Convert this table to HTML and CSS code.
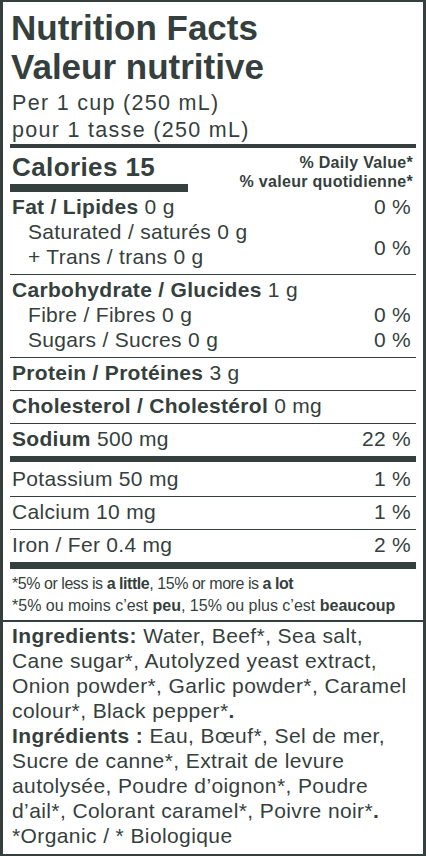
FILE: index.html
```html
<!DOCTYPE html>
<html lang="en">
<head>
  <meta charset="UTF-8" />
  <meta name="viewport" content="width=device-width, initial-scale=1.0">
  <title>Nutrition Facts</title>
  <link rel="stylesheet" href="styles.css">
</head>
<body>

  <div class="label">
    <section class="facts">
      <h1 class="title">Nutrition Facts<br>Valeur nutritive</h1>
      <p class="serving">Per 1 cup (250 mL)<br>pour 1 tasse (250 mL)</p>

      <div class="cal-row">
        <div class="calories">Calories 15</div>
        <div class="dv">% Daily Value*<br>% valeur quotidienne*</div>
      </div>

      <div class="row">
        <div class="line"><span><b>Fat / Lipides</b> 0 g</span><span class="pct">0 %</span></div>
        <div class="line pair">
          <div class="sub">Saturated / saturés 0 g<br>+ Trans / trans 0 g</div>
          <span class="pct">0 %</span>
        </div>
      </div>

      <div class="row">
        <div class="line"><span><b>Carbohydrate / Glucides</b> 1 g</span></div>
        <div class="line"><span class="sub">Fibre / Fibres 0 g</span><span class="pct">0 %</span></div>
        <div class="line"><span class="sub">Sugars / Sucres 0 g</span><span class="pct">0 %</span></div>
      </div>

      <div class="row">
        <div class="line"><span><b>Protein / Protéines</b> 3 g</span></div>
      </div>

      <div class="row">
        <div class="line"><span><b>Cholesterol / Cholestérol</b> 0 mg</span></div>
      </div>

      <div class="row thick">
        <div class="line"><span><b>Sodium</b> 500 mg</span><span class="pct">22 %</span></div>
      </div>

      <div class="row after-thick">
        <div class="line"><span>Potassium 50 mg</span><span class="pct">1 %</span></div>
      </div>

      <div class="row">
        <div class="line"><span>Calcium 10 mg</span><span class="pct">1 %</span></div>
      </div>

      <div class="row thicker">
        <div class="line"><span>Iron / Fer 0.4 mg</span><span class="pct">2 %</span></div>
      </div>

      <div class="footnote">
        <p class="en">*5% or less is <b>a little</b>, 15% or more is <b>a lot</b></p>
        <p>*5% ou moins c’est <b>peu</b>, 15% ou plus c’est <b>beaucoup</b></p>
      </div>
    </section>

    <section class="ingredients">
      <p><b>Ingredients:</b> Water, Beef*, Sea salt, Cane sugar*, Autolyzed yeast extract, Onion powder*, Garlic powder*, Caramel colour*, Black pepper*<b>.</b></p>
      <p><b>Ingrédients :</b> Eau, Bœuf*, Sel de mer, Sucre de canne*, Extrait de levure autolysée, Poudre d’oignon*, Poudre d’ail*, Colorant caramel*, Poivre noir*<b>.</b></p>
      <p>*Organic / * Biologique</p>
    </section>
  </div>

</body>
</html>
```

FILE: styles.css
```css
* {
  margin: 0;
  padding: 0;
  box-sizing: border-box;
}

html, body {
  background: #fff;
  font-family: 'Liberation Sans', Arial, sans-serif;
  color: #353f3d;
}

.label {
  width: 426px;
  height: 856px;
  border: 3px solid #353f3d;
  border-top-width: 2px;
  border-bottom-width: 2px;
  background: #fff;
}

.facts {
  padding: 6px 7px 0;
  border-bottom: 2px solid #353f3d;
}

.title {
  font-size: 35px;
  line-height: 39px;
  font-weight: bold;
  padding-left: 1px;
}

.serving {
  margin-top: 4px;
  padding: 0 0 0 2px;
  font-size: 21.5px;
  line-height: 27px;
  letter-spacing: 1.3px;
  border-bottom: 4px solid #353f3d;
}

.cal-row {
  display: flex;
  justify-content: space-between;
  align-items: flex-start;
}

.calories {
  width: 178px;
  padding: 4px 0 2px 2px;
  font-size: 26px;
  line-height: 30px;
  font-weight: bold;
  letter-spacing: 0.4px;
  border-bottom: 8px solid #353f3d;
}

.dv {
  padding: 5px 3px 0 0;
  font-size: 16px;
  line-height: 19px;
  font-weight: bold;
  text-align: right;
  letter-spacing: 0.3px;
}

.row {
  padding: 2px 0 5px;
  font-size: 21px;
  line-height: 25px;
  letter-spacing: 0.3px;
  border-bottom: 1px solid #353f3d;
}

.row.thick {
  border-bottom-width: 6px;
}

.row.after-thick {
  padding-top: 4px;
}

.row.thicker {
  border-bottom-width: 7px;
}

.line {
  display: flex;
  justify-content: space-between;
  padding-left: 2px;
}

.line.pair {
  align-items: center;
}

.line.pair .pct {
  margin-top: 6px;
}

.sub {
  padding-left: 16px;
}

.pct {
  padding-right: 5px;
  white-space: nowrap;
}

.footnote {
  padding: 4px 0 3px 2px;
  font-size: 16px;
  line-height: 22px;
}

.footnote .en {
  letter-spacing: -0.45px;
}

.ingredients {
  padding: 1px 7px 6px 9px;
  font-size: 21px;
  line-height: 25px;
  letter-spacing: 0.4px;
}
```
